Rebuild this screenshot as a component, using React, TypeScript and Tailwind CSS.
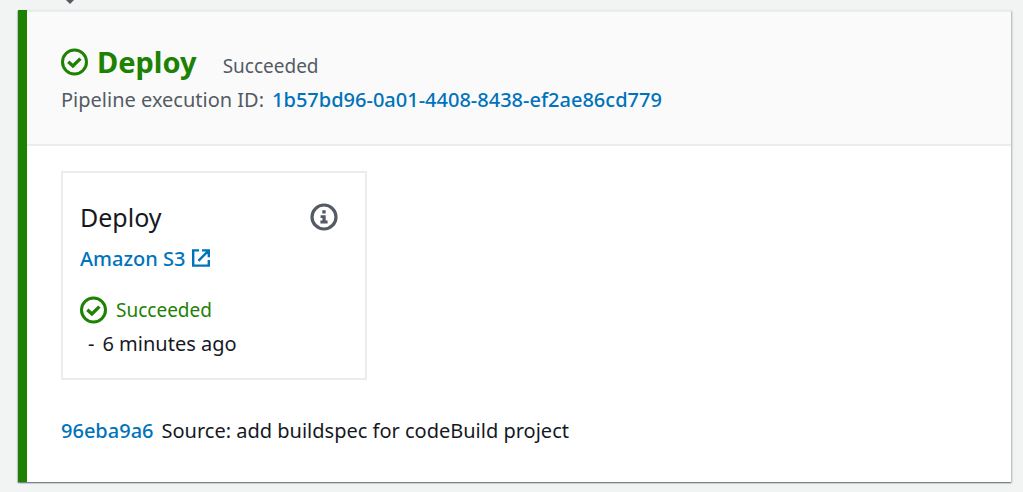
function SuccessIcon() {
  return (
    <svg viewBox="0 0 28 28" className="h-7 w-7 shrink-0" fill="none" stroke="currentColor" strokeWidth="3" aria-hidden="true">
      <circle cx="13.5" cy="14" r="12" />
      <path d="M7.3 13.8 11.9 17.9 19.4 10.6" strokeWidth="3.4" />
    </svg>
  );
}

function InfoIcon() {
  return (
    <svg viewBox="0 0 28 28" className="h-7 w-7" fill="none" aria-hidden="true">
      <circle cx="14" cy="14" r="12" stroke="currentColor" strokeWidth="3.2" />
      <path d="M12.3 7.3h3.4v3.2h-3.4zM10.6 12.2h5.1v5.4h1.9v2.8h-7.2v-2.8h2v-2.6h-1.8z" fill="currentColor" />
    </svg>
  );
}

function ExternalIcon() {
  return (
    <svg viewBox="0 0 20 20" className="h-5 w-5" fill="none" stroke="currentColor" strokeWidth="2.4" aria-hidden="true">
      <path d="M8 1.4H2.2v15.2H17.8V11M11 1.4h6.8v6.8M17.6 1.6 7.4 11.8" />
    </svg>
  );
}

export default function App() {
  return (
    <main className="min-h-screen bg-[#f2f3f3] pr-3 pb-[10px] pl-[18px] font-['Noto_Sans',sans-serif] text-[20px] leading-8 text-[#16191f]">
      <div className="h-[10px] pl-12">
        <svg viewBox="0 0 8 4" className="h-1 w-2" fill="#545b64" aria-hidden="true">
          <path d="M0 0h8L4 4z" />
        </svg>
      </div>
      <section className="border-l-[9px] border-[#1d8102] bg-white shadow-[0_1px_1px_0_rgb(0_28_36/0.3),1px_1px_2px_0_rgb(0_28_36/0.25),-1px_1px_1px_0_rgb(0_28_36/0.15)]">
        <header className="border-y-2 border-[#eaeded] bg-[#fafafa] px-[34px] pt-[34px] pb-7">
          <div className="flex items-center gap-2">
            <h2 className="flex items-center gap-2 text-[29px] leading-8 font-bold text-[#1d8102]">
              <SuccessIcon />
              Deploy
            </h2>
            <span className="pt-2 pl-[18px] text-[19px] leading-6 text-[#545b64]">Succeeded</span>
          </div>
          <p className="mt-[6px] flex flex-wrap gap-x-2 text-[#545b64]">
            <span>Pipeline execution ID:</span>
            <a href="#execution" className="font-medium text-[#0073bb]">1b57bd96-0a01-4408-8438-ef2ae86cd779</a>
          </p>
        </header>
        <div className="px-[34px] pt-[25px] pb-[35px]">
          <article className="w-full max-w-[306px] border-2 border-[#eaeded] px-[17px] pt-7 pb-[18px]">
            <div className="flex items-center justify-between pr-[10px]">
              <h3 className="text-[25px] leading-8">Deploy</h3>
              <button type="button" aria-label="Action details" className="text-[#545b64]">
                <InfoIcon />
              </button>
            </div>
            <a href="#s3" className="mt-[10px] flex w-fit items-center gap-[6px] font-medium text-[#0073bb]">
              Amazon S3
              <ExternalIcon />
            </a>
            <p className="mt-[19px] flex items-center gap-2 text-[19px] text-[#1d8102]">
              <SuccessIcon />
              Succeeded
            </p>
            <p className="mt-[2px] flex gap-2 pl-2">
              <span>-</span>
              <span>6 minutes ago</span>
            </p>
          </article>
          <p className="mt-[35px] flex flex-wrap gap-x-2">
            <a href="#commit" className="font-medium text-[#0073bb]">96eba9a6</a>
            <span>Source: add buildspec for codeBuild project</span>
          </p>
        </div>
      </section>
    </main>
  );
}
